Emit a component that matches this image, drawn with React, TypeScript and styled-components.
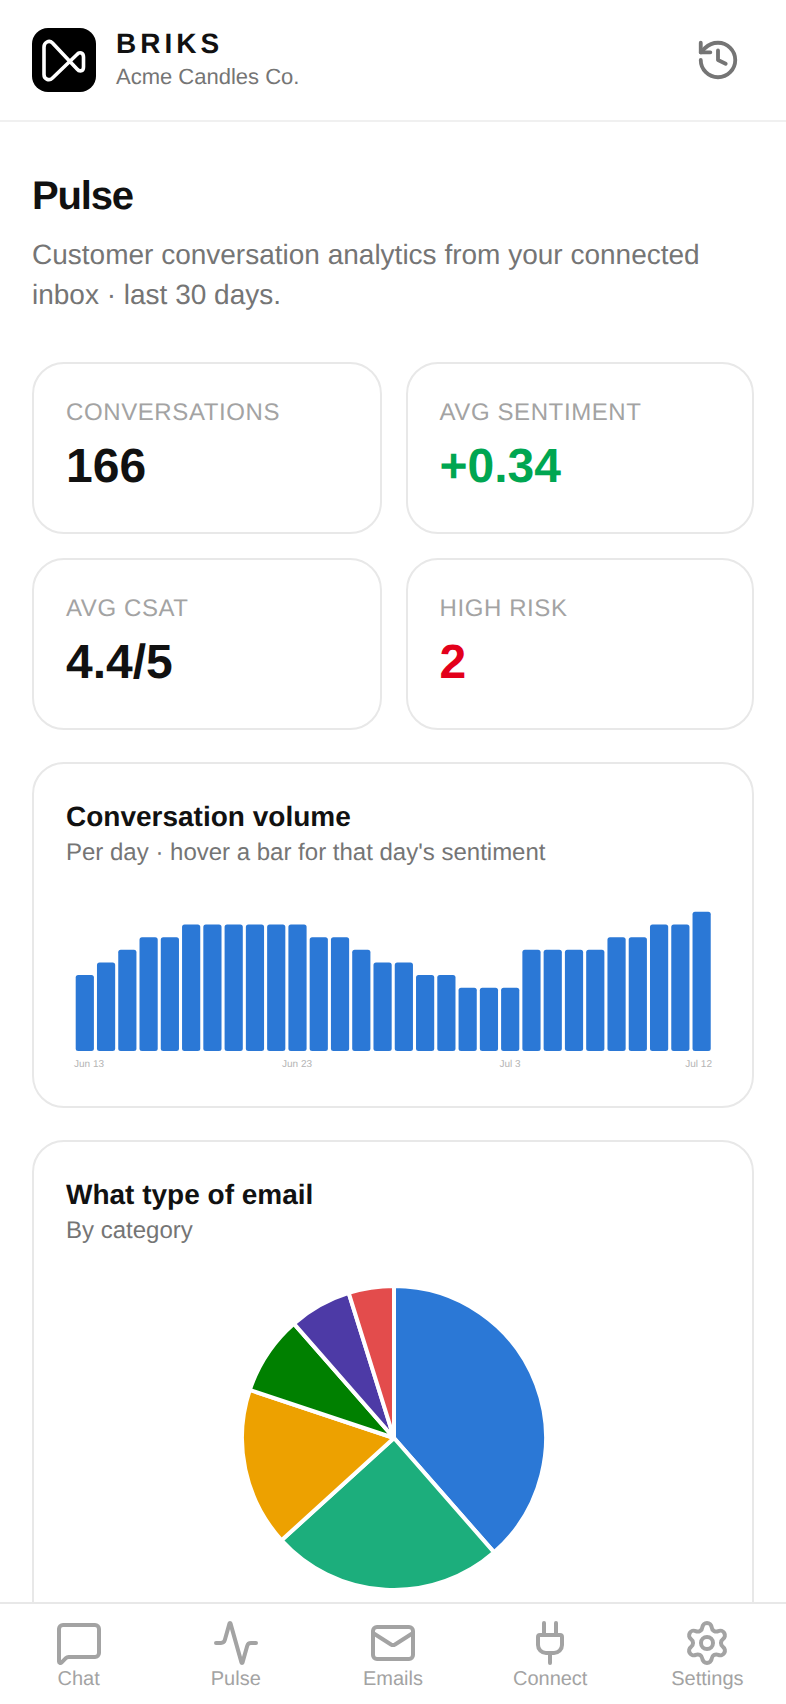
import React from "react";
import styled, { createGlobalStyle } from "styled-components";
import { Activity, History, Mail, MessageSquare, Plug, Settings } from "lucide-react";

const GlobalStyle = createGlobalStyle`
  html, body {
    margin: 0;
    padding: 0;
    background: #fff;
  }
  * {
    box-sizing: border-box;
  }
  body {
    font-family: "Liberation Sans", Arial, sans-serif;
    color: #111;
    text-rendering: geometricPrecision;
  }
`;

// ====== Layout ======
const Screen = styled.div`
  display: flex;
  flex-direction: column;
  height: 100vh;
  overflow: hidden;
`;

const Header = styled.header`
  flex: none;
  display: flex;
  align-items: center;
  justify-content: space-between;
  height: 122px;
  padding: 0 32px;
  border-bottom: 2px solid #f0f0f0;
`;

const Brand = styled.div`
  display: flex;
  align-items: center;
  gap: 20px;
`;

const LogoBox = styled.div`
  width: 64px;
  height: 64px;
  border-radius: 16px;
  background: #000;
`;

const BrandText = styled.div`
  padding-bottom: 2px;
`;

const BrandName = styled.div`
  margin-bottom: 2px;
  font-size: 28px;
  line-height: 34px;
  font-weight: 700;
  letter-spacing: 4px;
`;

const BrandSub = styled.div`
  font-size: 22px;
  line-height: 28px;
  color: #757575;
`;

const HistoryButton = styled.button`
  display: flex;
  padding: 0;
  margin-right: 13px;
  border: none;
  background: none;
  color: #757575;
`;

const Main = styled.main`
  flex: 1;
  min-height: 0;
  overflow: hidden;
  padding: 50px 32px 0;
`;

const Title = styled.h1`
  margin: 0;
  font-size: 40px;
  line-height: 48px;
  font-weight: 700;
  letter-spacing: -1.2px;
`;

const Lead = styled.p`
  margin: 15px 0 0;
  font-size: 28px;
  line-height: 40px;
  color: #757575;
`;

const StatGrid = styled.div`
  display: grid;
  grid-template-columns: 349.5px 348.5px;
  gap: 24px;
  margin-top: 47px;
`;

const StatCard = styled.div`
  height: 172px;
  padding: 35px 32px 0;
  border: 2px solid #e8e8e8;
  border-radius: 32px;
`;

const StatLabel = styled.div`
  font-size: 24px;
  line-height: 28px;
  letter-spacing: 0.6px;
  color: #a3a3a3;
`;

const StatValue = styled.div<{ $tone?: string }>`
  margin-top: 12px;
  font-size: 48px;
  line-height: 56px;
  font-weight: 700;
  color: ${({ $tone }) => $tone || "#111"};
`;

const Card = styled.section`
  margin-top: 32px;
  padding: 35px 32px 34px;
  border: 2px solid #e8e8e8;
  border-radius: 32px;
`;

const PieCard = styled(Card)`
  min-height: 600px;
`;

const CardTitle = styled.h2`
  margin: 0 0 2px;
  font-size: 28px;
  line-height: 35px;
  font-weight: 700;
`;

const CardSub = styled.div`
  font-size: 24px;
  line-height: 34px;
  color: #757575;
`;

const BarSvg = styled.svg`
  display: block;
  width: 100%;
  height: 192px;
  margin-top: 10px;
`;

const PieWrap = styled.div`
  display: flex;
  justify-content: center;
  padding-left: 2px;
  margin-top: 36px;
`;

const BottomNav = styled.nav`
  flex: none;
  display: grid;
  grid-template-columns: repeat(5, 1fr);
  height: 102px;
  padding-top: 15px;
  border-top: 2px solid #e8e8e8;
  background: #fff;
`;

const NavItem = styled.div`
  display: flex;
  flex-direction: column;
  align-items: center;
  font-size: 20px;
  line-height: 24px;
  color: #a3a3a3;
`;

// ====== Data ======
const stats = [
  { label: "CONVERSATIONS", value: "166" },
  { label: "AVG SENTIMENT", value: "+0.34", tone: "#00a651" },
  { label: "AVG CSAT", value: "4.4/5" },
  { label: "HIGH RISK", value: "2", tone: "#e3001b" },
];

const volume = [
  6, 7, 8, 9, 9, 10, 10, 10, 10, 10, 10, 9, 9, 8, 7, 7, 6, 6, 5, 5, 5, 8, 8, 8, 8, 9, 9, 10, 10, 11,
];

const categories = [
  { count: 64, color: "#2b78d6" },
  { count: 41, color: "#1cae7c" },
  { count: 28, color: "#eda100" },
  { count: 14, color: "#008000" },
  { count: 11, color: "#4d3aa6" },
  { count: 8, color: "#e34c4c" },
];

const navItems = [
  { label: "Chat", Icon: MessageSquare },
  { label: "Pulse", Icon: Activity },
  { label: "Emails", Icon: Mail },
  { label: "Connect", Icon: Plug },
  { label: "Settings", Icon: Settings },
];

const BarChart = () => (
  <BarSvg viewBox="0 0 654 192">
    {volume.map((v, i) => (
      <rect
        key={i}
        x={9.7 + i * 21.27}
        y={171 - v * 12.65}
        width={18.2}
        height={v * 12.65}
        rx={2.5}
        fill="#2b78d6"
      />
    ))}
    <g fontSize="10" fill="#b4b4b4">
      <text x="8" y="187">Jun 13</text>
      <text x="231" y="187" textAnchor="middle">Jun 23</text>
      <text x="444" y="187" textAnchor="middle">Jul 3</text>
      <text x="646" y="187" textAnchor="end">Jul 12</text>
    </g>
  </BarSvg>
);

const PieChart = () => {
  const total = categories.reduce((sum, c) => sum + c.count, 0);
  const r = 152;
  let start = 0;
  return (
    <svg width="308" height="308" viewBox="-154 -154 308 308">
      {categories.map((c) => {
        const end = start + (c.count / total) * Math.PI * 2;
        const x1 = r * Math.sin(start);
        const y1 = -r * Math.cos(start);
        const x2 = r * Math.sin(end);
        const y2 = -r * Math.cos(end);
        const large = end - start > Math.PI ? 1 : 0;
        start = end;
        return (
          <path
            key={c.color}
            d={`M0 0L${x1} ${y1}A${r} ${r} 0 ${large} 1 ${x2} ${y2}Z`}
            fill={c.color}
            stroke="#fff"
            strokeWidth="4"
            strokeLinejoin="round"
          />
        );
      })}
    </svg>
  );
};

export default function App() {
  return (
    <Screen>
      <GlobalStyle />
      <Header>
        <Brand>
          <LogoBox>
            <svg width="64" height="64" viewBox="0 0 64 64" fill="none">
              <path
                d="M12 19C12 14.5 17 11.5 20.5 15L45 41C47.5 44 51.5 43.5 51.5 39V29C51.5 24.5 47.5 23.5 45 26.5L20.5 50C17 53.5 12 51 12 46.5Z"
                stroke="#fff"
                strokeWidth="3.6"
                strokeLinejoin="round"
              />
            </svg>
          </LogoBox>
          <BrandText>
            <BrandName>BRIKS</BrandName>
            <BrandSub>Acme Candles Co.</BrandSub>
          </BrandText>
        </Brand>
        <HistoryButton>
          <History size={46} />
        </HistoryButton>
      </Header>

      <Main>
        <Title>Pulse</Title>
        <Lead>Customer conversation analytics from your connected inbox · last 30 days.</Lead>

        <StatGrid>
          {stats.map((s) => (
            <StatCard key={s.label}>
              <StatLabel>{s.label}</StatLabel>
              <StatValue $tone={s.tone}>{s.value}</StatValue>
            </StatCard>
          ))}
        </StatGrid>

        <Card>
          <CardTitle>Conversation volume</CardTitle>
          <CardSub>Per day · hover a bar for that day's sentiment</CardSub>
          <BarChart />
        </Card>

        <PieCard>
          <CardTitle>What type of email</CardTitle>
          <CardSub>By category</CardSub>
          <PieWrap>
            <PieChart />
          </PieWrap>
        </PieCard>
      </Main>

      <BottomNav>
        {navItems.map(({ label, Icon }) => (
          <NavItem key={label}>
            <Icon size={48} />
            {label}
          </NavItem>
        ))}
      </BottomNav>
    </Screen>
  );
}
